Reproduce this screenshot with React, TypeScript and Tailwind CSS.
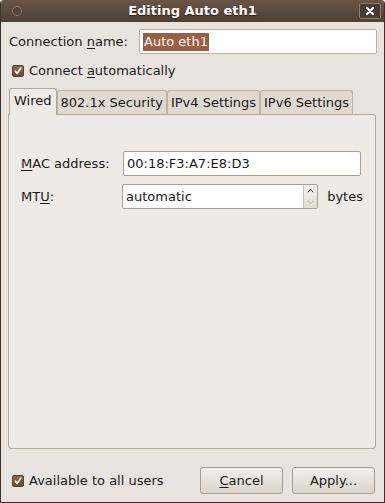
import React from 'react';

const font = { fontFamily: '"DejaVu Sans", "Liberation Sans", sans-serif' };

function Check() {
  return (
    <span className="flex h-[12px] w-[12px] items-center justify-center rounded-[2px] border border-[#5a4232] bg-gradient-to-b from-[#8a6a56] to-[#6a4c3a]">
      <svg width="8" height="8" viewBox="0 0 9 9">
        <path d="M1.5 4.8 L3.6 7.2 L7.6 1.2" fill="none" stroke="#fff" strokeWidth="1.9" strokeLinecap="round" strokeLinejoin="round" />
      </svg>
    </span>
  );
}

function Tab({ label, active }: { label: string; active?: boolean }) {
  if (active) {
    return (
      <div className="-mb-px z-10 flex h-[27px] items-center rounded-t-[3px] border border-b-0 border-[#b3a898] bg-[#eeeae5] px-[4px] pb-[2px] text-[#1a1a1a]">
        {label}
      </div>
    );
  }
  return (
    <div className="flex h-[24px] items-center rounded-t-[3px] border border-b-0 border-[#bcb2a5] bg-[#e0d9d0] px-[3px] text-[#1a1a1a]">
      {label}
    </div>
  );
}

function Button({ children }: { children: React.ReactNode }) {
  return (
    <div className="flex h-[27px] w-[83px] items-center justify-center rounded-[3px] border border-[#a89c8e] bg-gradient-to-b from-[#f2eee9] to-[#ddd5cb] text-[#1a1a1a]">
      {children}
    </div>
  );
}

export default function App() {
  return (
    <div
      className="flex h-[503px] w-[385px] flex-col overflow-hidden rounded-t-[4px] border border-t-0 border-[#3c302a] bg-[#e8e3dc] text-[13px] text-[#1a1a1a]"
      style={font}
    >
      {/* title bar */}
      <div className="grid h-[22px] grid-cols-[40px_1fr_40px] items-center bg-gradient-to-b from-[#6a5546] to-[#4f3f35]">
        <div className="flex pl-[11px]">
          <span className="h-[10px] w-[10px] rounded-full border border-[#8a7566] bg-[#54443a]" />
        </div>
        <div className="text-center text-[13px] font-bold text-white [text-shadow:0_1px_1px_#2a1f18]">Editing Auto eth1</div>
        <div className="flex justify-end pr-[3px]">
          <span className="flex h-[16px] w-[22px] items-center justify-center rounded-[2px] border border-[#8f7c6e] bg-[#4a3b32]">
            <svg width="10" height="10" viewBox="0 0 10 10">
              <path d="M2 2 L8 8 M8 2 L2 8" stroke="#fff" strokeWidth="2.2" strokeLinecap="round" />
            </svg>
          </span>
        </div>
      </div>

      <div className="flex flex-1 flex-col px-[7px]">
        {/* connection name */}
        <div className="mt-[7px] flex h-[25px] items-center">
          <span className="w-[131px] pl-px">
            Connection <span className="underline underline-offset-2">n</span>ame:
          </span>
          <div className="flex h-[25px] flex-1 items-center rounded-[2px] border border-[#c9ab98] bg-white px-[3px]">
            <span className="bg-[#9a5e43] px-px leading-[18px] text-white">Auto eth1</span>
          </div>
        </div>

        {/* connect automatically */}
        <div className="mt-[7px] flex h-[20px] items-center gap-[5px] pl-[4px]">
          <Check />
          <span>
            Connect <span className="underline underline-offset-2">a</span>utomatically
          </span>
        </div>

        {/* tabs */}
        <div className="mt-[7px] flex items-end pl-px">
          <Tab label="Wired" active />
          <Tab label="802.1x Security" />
          <Tab label="IPv4 Settings" />
          <Tab label="IPv6 Settings" />
        </div>
        <div className="mr-px flex h-[335px] flex-col rounded-b-[3px] rounded-tr-[3px] border border-[#b3a898] bg-[#eeeae5] px-[12px] pt-[36px]">
          <div className="flex h-[25px] items-center">
            <span className="w-[102px]">
              <span className="underline underline-offset-2">M</span>AC address:
            </span>
            <div className="mr-[2px] flex h-[25px] flex-1 items-center rounded-[2px] border border-[#a99f94] bg-white px-[3px]">
              00:18:F3:A7:E8:D3
            </div>
          </div>
          <div className="mt-[8px] flex h-[25px] items-center">
            <span className="w-[102px]">
              MT<span className="underline underline-offset-2">U</span>:
            </span>
            <div className="flex h-[25px] w-[198px] rounded-[2px] border border-[#a99f94] bg-white">
              <div className="flex flex-1 items-center px-[3px]">automatic</div>
              <div className="flex w-[14px] flex-col border-l border-[#c8c0b6] bg-gradient-to-b from-[#f4f1ed] to-[#e2dbd2]">
                <div className="flex flex-1 items-center justify-center">
                  <svg width="7" height="5" viewBox="0 0 7 5">
                    <path d="M0.8 4.2 L3.5 1.2 L6.2 4.2" fill="none" stroke="#3a3a3a" strokeWidth="1" />
                  </svg>
                </div>
                <div className="flex flex-1 items-center justify-center">
                  <svg width="7" height="5" viewBox="0 0 7 5">
                    <path d="M0.8 0.8 L3.5 3.8 L6.2 0.8" fill="none" stroke="#b5aea6" strokeWidth="1" />
                  </svg>
                </div>
              </div>
            </div>
            <span className="ml-[9px]">bytes</span>
          </div>
        </div>

        {/* bottom row */}
        <div className="mt-[18px] flex items-center">
          <div className="flex flex-1 items-center gap-[5px] pl-[4px]">
            <Check />
            <span>Available to all users</span>
          </div>
          <div className="flex gap-[9px] pr-[2px]">
            <Button>
              <span>
                <span className="underline underline-offset-2">C</span>ancel
              </span>
            </Button>
            <Button>Apply...</Button>
          </div>
        </div>
      </div>
    </div>
  );
}
